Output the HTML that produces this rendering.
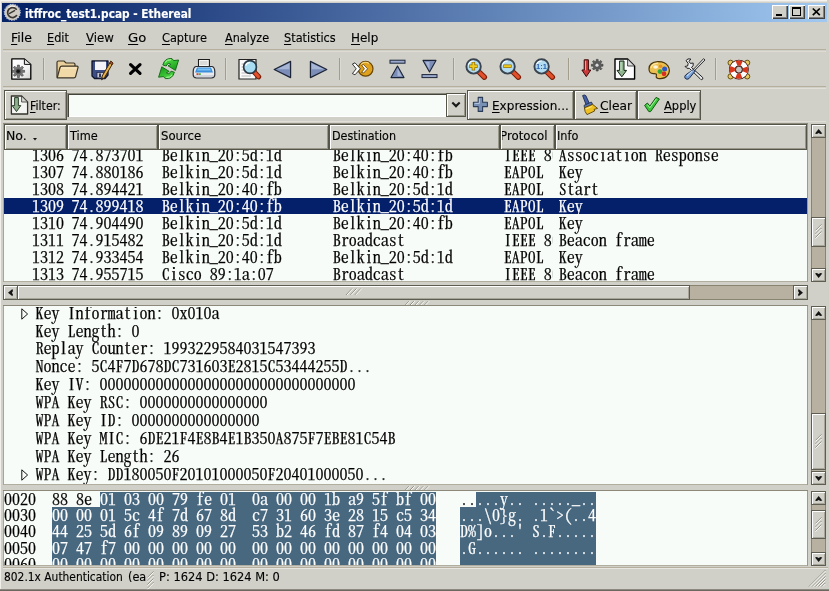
<!DOCTYPE html>
<html><head><meta charset="utf-8"><title>itffroc_test1.pcap - Ethereal</title>
<style>
html,body{margin:0;padding:0}
body{width:829px;height:591px;overflow:hidden;background:#d0d0c8;position:relative;font-family:"DejaVu Sans","Liberation Sans",sans-serif;font-size:13px}
#w{position:absolute;left:-6px;top:-6px;width:841px;height:603px;overflow:hidden;background:#d0d0c8;filter:blur(0.35px)}
#c{position:absolute;left:6px;top:6px;width:829px;height:591px;overflow:visible}
#w div,#w svg,#w span.u,#w span.m{position:absolute;box-sizing:border-box}
#w svg{overflow:visible}
span.u{white-space:pre;transform-origin:0 0;display:block;-webkit-text-stroke:0.15px currentColor}
span.u u{text-decoration:underline;text-underline-offset:1.5px;text-decoration-thickness:1px}
.r{left:0;width:803px;height:16px}
.m{top:0;height:16px;line-height:16px;font-family:"Noto Serif CJK SC","Noto Serif CJK JP","Liberation Mono",monospace;font-feature-settings:"hwid";font-size:16px;white-space:pre;clip-path:inset(-4px 0 -4px 0);letter-spacing:0;-webkit-text-stroke:0.25px currentColor}
.m .s{color:#fff}
</style></head>
<body><div id="w"><div id="c">
<div style="left:-6px;top:-6px;width:841px;height:7px;background:#f4f3ef"></div><div style="left:-6px;top:-6px;width:7px;height:603px;background:#f0efea"></div><div style="left:1px;top:1px;width:828px;height:1px;background:#e2e0d9"></div><div style="left:827px;top:0px;width:8px;height:591px;background:#d0d0c8"></div><div style="left:-6px;top:589px;width:841px;height:1px;background:#8c8a80"></div><div style="left:-6px;top:590px;width:841px;height:7px;background:#6a685f"></div><div style="left:2px;top:3px;width:825px;height:19px;background:linear-gradient(90deg,#082468 0%,#082468 3%,#a0c8f0 100%)"></div><svg style="left:3px;top:3px" width="19" height="19" viewBox="0 0 19 19">
<circle cx="9.3" cy="9.3" r="8" fill="#cfcbc2" stroke="#aebfdc" stroke-width="1.2" stroke-dasharray="1.2 1.3"/>
<circle cx="9.3" cy="9.3" r="6.9" fill="#d0ccc4"/>
<path d="M13.3 6.2 A5 5 0 1 0 13.6 12.6" fill="none" stroke="#3a3631" stroke-width="1.7" stroke-linecap="round"/>
<path d="M6.6 10.4 L11.6 7.6" stroke="#3a3631" stroke-width="1.4" stroke-linecap="round"/>
<path d="M5.5 4.5 A6 6 0 0 1 12 3.6" fill="none" stroke="#f4f2ee" stroke-width="1"/>
</svg><div style="left:772px;top:5px;width:16px;height:14px;background:#d0d0c8;box-shadow:inset 1px 1px 0 #fff, inset -1px -1px 0 #404040, inset -2px -2px 0 #808080"><div style="left:4px;top:9px;width:6px;height:2px;background:#000"></div></div><div style="left:789px;top:5px;width:16px;height:14px;background:#d0d0c8;box-shadow:inset 1px 1px 0 #fff, inset -1px -1px 0 #404040, inset -2px -2px 0 #808080"><div style="left:3px;top:2px;width:9px;height:9px;box-sizing:border-box;border:1px solid #000;border-top-width:2px"></div></div><div style="left:808px;top:5px;width:17px;height:14px;background:#d0d0c8;box-shadow:inset 1px 1px 0 #fff, inset -1px -1px 0 #404040, inset -2px -2px 0 #808080"><svg style="left:4px;top:3px" width="9" height="8" viewBox="0 0 9 8"><path d="M0.8 0.5 L7.8 7.2 M7.8 0.5 L0.8 7.2" stroke="#000" stroke-width="1.7"/></svg></div><div style="left:3px;top:49px;width:823px;height:1px;background:#b6af9e"></div><div style="left:3px;top:51px;width:823px;height:1px;background:#dedbd3"></div><div style="left:3px;top:86px;width:823px;height:1px;background:#b6af9e"></div><div style="left:3px;top:88px;width:823px;height:1px;background:#e2dfd8"></div><div style="left:3px;top:121px;width:823px;height:1px;background:#e2dfd8"></div><div style="left:43px;top:58px;width:1px;height:22px;background:#a39d8c"></div><div style="left:44px;top:58px;width:1px;height:22px;background:#dcd9d1"></div><div style="left:225px;top:58px;width:1px;height:22px;background:#a39d8c"></div><div style="left:226px;top:58px;width:1px;height:22px;background:#dcd9d1"></div><div style="left:339px;top:58px;width:1px;height:22px;background:#a39d8c"></div><div style="left:340px;top:58px;width:1px;height:22px;background:#dcd9d1"></div><div style="left:453px;top:58px;width:1px;height:22px;background:#a39d8c"></div><div style="left:454px;top:58px;width:1px;height:22px;background:#dcd9d1"></div><div style="left:568px;top:58px;width:1px;height:22px;background:#a39d8c"></div><div style="left:569px;top:58px;width:1px;height:22px;background:#dcd9d1"></div><div style="left:715px;top:58px;width:1px;height:22px;background:#a39d8c"></div><div style="left:716px;top:58px;width:1px;height:22px;background:#dcd9d1"></div><svg style="left:11px;top:58px" width="21" height="22" viewBox="0 0 21 22">
<defs><linearGradient id="dg" x1="0" y1="0" x2="1" y2="1"><stop offset="0" stop-color="#ffffff"/><stop offset="0.6" stop-color="#f4f4f4"/><stop offset="1" stop-color="#d2d2d0"/></linearGradient></defs>
<path d="M0.8 0.9 H13.4 L19.8 6.6 V21.2 H0.8 Z" fill="url(#dg)" stroke="#000" stroke-width="1.3" stroke-linejoin="round"/>
<path d="M13.4 1.2 V6.4 H19.6" fill="#e6e6e4" stroke="#111" stroke-width="1"/>
<path d="M11.48 12.29 L13.61 12.27 L13.61 14.33 L11.48 14.31 L11.00 15.47 L12.53 16.96 L11.06 18.43 L9.57 16.90 L8.41 17.38 L8.43 19.51 L6.37 19.51 L6.39 17.38 L5.23 16.90 L3.74 18.43 L2.27 16.96 L3.80 15.47 L3.32 14.31 L1.19 14.33 L1.19 12.27 L3.32 12.29 L3.80 11.13 L2.27 9.64 L3.74 8.17 L5.23 9.70 L6.39 9.22 L6.37 7.09 L8.43 7.09 L8.41 9.22 L9.57 9.70 L11.06 8.17 L12.53 9.64 L11.00 11.13 Z" fill="#7a7a7a" stroke="#333" stroke-width="0.55" stroke-linejoin="round"/><circle cx="7.4" cy="13.3" r="2.8" fill="#565656"/><circle cx="7.2" cy="13.3" r="1.8" fill="#151515"/></svg><svg style="left:56px;top:60px" width="23" height="19" viewBox="0 0 23 19">
<path d="M1 17.5 V2.5 Q1 1 2.5 1 H8 L10 3 H17.5 Q19 3 19 4.5 V6" fill="#e9cf9c" stroke="#3c3424" stroke-width="1.2"/>
<path d="M1.2 17.8 L4 7.5 Q4.4 6.2 5.8 6.2 H21 Q22.4 6.2 22 7.6 L19.6 16.6 Q19.2 17.8 18 17.8 Z" fill="#f1d9a8" stroke="#3c3424" stroke-width="1.2" stroke-linejoin="round"/>
<path d="M5 8 H20.5" stroke="#fbecc8" stroke-width="1"/></svg><svg style="left:91px;top:58px" width="23" height="23" viewBox="0 0 23 23">
<path d="M1 3 H17 V17 L14 20.5 H3.5 L1 18 Z" fill="#3d4d86" stroke="#10142a" stroke-width="1.3" stroke-linejoin="round"/>
<rect x="4" y="3.6" width="11" height="8.4" fill="#f4f4f8"/>
<rect x="6" y="14.5" width="8" height="5.4" fill="#c8c8d0" stroke="#1c2040" stroke-width="0.7"/>
<rect x="8" y="15.5" width="2" height="3.5" fill="#30365c"/>
<path d="M19.8 3.2 L22 5 L13.6 19.4 L10.6 21.8 L11.2 18 Z" fill="#e8b24a" stroke="#3a2608" stroke-width="1"/>
<path d="M19.8 3.2 L22 5 L21 6.8 L18.8 5 Z" fill="#d64a30" stroke="#3a2608" stroke-width="0.8"/>
<path d="M10.6 21.8 L11 19.6 L12.4 20.6 Z" fill="#222"/></svg><svg style="left:128px;top:62px" width="15" height="14" viewBox="0 0 15 14">
<path d="M2.6 2.6 L12 11.4 M12 2.6 L2.6 11.4" stroke="#000" stroke-width="3.2" stroke-linecap="round"/></svg><svg style="left:158px;top:57px" width="22" height="24" viewBox="0 0 22 24">
<defs><linearGradient id="rg" x1="0" y1="0" x2="0.6" y2="1"><stop offset="0" stop-color="#5ae44e"/><stop offset="1" stop-color="#1aa01c"/></linearGradient></defs>
<g id="ra"><path d="M4.8 8 Q6.8 0.6 14 1.6 L15.6 3.6 L20.6 3 L17.4 13.4 L10 8.8 L12.8 7.4 Q10.2 4.8 8.2 9 Z" fill="url(#rg)" stroke="#0e6410" stroke-width="0.9" stroke-linejoin="round"/>
<path d="M7.2 5.4 Q9 2.4 13 2.8" fill="none" stroke="#b4f8a4" stroke-width="1"/></g>
<use href="#ra" transform="rotate(180 10.6 11.6)"/></svg><svg style="left:192px;top:58px" width="24" height="22" viewBox="0 0 24 22">
<path d="M6.5 9 V1.5 H17.4 V9" fill="#f6f6f6" stroke="#1c1c1c" stroke-width="1.1"/>
<path d="M8 4 H15.5 M8 6 H15.5" stroke="#b0b0b0" stroke-width="0.8"/>
<path d="M4 8.5 H20 Q22.6 9 22.8 13.5 V17 Q22.6 19.8 19.5 20 H4.5 Q1.4 19.8 1.2 17 V13.5 Q1.4 9 4 8.5 Z" fill="#e8eaee" stroke="#2a2c34" stroke-width="1.2"/>
<path d="M5 9.6 H19 L21 14.4 H3 Z" fill="#3b8fdc"/>
<path d="M6 10.4 H18 L19 12.4 H5.2 Z" fill="#7cc2f4"/>
<rect x="4.5" y="15.3" width="2" height="1.6" fill="#d03020"/><rect x="6.8" y="15.3" width="2" height="1.6" fill="#38a838"/>
<path d="M2.5 18 H21.5" stroke="#b8bcc4" stroke-width="1"/></svg><svg style="left:238px;top:58px" width="24" height="23" viewBox="0 0 24 23">
<path d="M1 1.5 H18 V21 H1 Z" fill="#fafafa" stroke="#222" stroke-width="1.2"/>
<path d="M3.5 6 H8 M3.5 9 H7 M3.5 12 H8 M3.5 15 H14 M3.5 18 H13" stroke="#b8b8b8" stroke-width="1"/>
<path d="M16.4 14.2 L20.6 18.8" stroke="#7a1e0a" stroke-width="5.2" stroke-linecap="round"/>
<path d="M16.6 14.4 L20.4 18.6" stroke="#e0502a" stroke-width="3.2" stroke-linecap="round"/>
<circle cx="12" cy="9" r="6.4" fill="#a8dcf2" stroke="#2c3a48" stroke-width="1.7"/>
<path d="M7.8 7.6 A4 4 0 0 1 12 4.6" fill="none" stroke="#fff" stroke-width="1.3"/></svg><svg style="left:273px;top:60px" width="19" height="19" viewBox="0 0 19 19">
<path d="M1.2 9.5 L17.6 1.4 V17.6 Z" fill="#7c8eb8" stroke="#1c2438" stroke-width="1.2" stroke-linejoin="round"/>
<path d="M4 9.3 L16.4 3.3 V9.3 Z" fill="#a8b6d6"/></svg><svg style="left:309px;top:60px" width="19" height="19" viewBox="0 0 19 19">
<path d="M17.8 9.5 L1.4 1.4 V17.6 Z" fill="#7c8eb8" stroke="#1c2438" stroke-width="1.2" stroke-linejoin="round"/>
<path d="M15 9.3 L2.6 3.3 V9.3 Z" fill="#a8b6d6"/></svg><svg style="left:351px;top:60px" width="23" height="18" viewBox="0 0 23 18">
<circle cx="14.6" cy="8.8" r="7.4" fill="#e0a21c" stroke="#6a4604" stroke-width="1.2"/>
<path d="M10 4.6 A6 6 0 0 1 18 3.4" fill="none" stroke="#f8dc84" stroke-width="1.2"/>
<path d="M1.4 4 L4 2.8 L9.4 8.8 L4 14.8 L1.4 13.6 L5.2 8.8 Z" fill="#fff" stroke="#222" stroke-width="0.9" stroke-linejoin="round"/>
<path d="M10.6 5.2 L12.6 4.6 L16.6 8.8 L12.6 13 L10.6 12.4 L13.4 8.8 Z" fill="#fff" stroke="#5a3a04" stroke-width="0.8" stroke-linejoin="round"/></svg><svg style="left:389px;top:59px" width="17" height="20" viewBox="0 0 17 20">
<rect x="1" y="1.2" width="15" height="3" fill="#9caace" stroke="#1c2438" stroke-width="1"/>
<path d="M8.5 7 L15 18.6 H2 Z" fill="#7c8eb8" stroke="#1c2438" stroke-width="1.1" stroke-linejoin="round"/>
<path d="M8.5 9 L12.6 17 H8.5 Z" fill="#a8b6d6"/></svg><svg style="left:421px;top:59px" width="17" height="20" viewBox="0 0 17 20">
<rect x="1" y="15.6" width="15" height="3" fill="#9caace" stroke="#1c2438" stroke-width="1"/>
<path d="M8.5 13 L15 1.4 H2 Z" fill="#7c8eb8" stroke="#1c2438" stroke-width="1.1" stroke-linejoin="round"/>
<path d="M8.5 11 L4.4 3 H8.5 Z" fill="#a8b6d6"/></svg><svg style="left:465px;top:58px" width="23" height="23" viewBox="0 0 23 23">
<path d="M13.4 13.4 L19.4 19.2" stroke="#7a1e0a" stroke-width="5.4" stroke-linecap="round"/>
<path d="M13.6 13.6 L19.2 19" stroke="#e0502a" stroke-width="3.4" stroke-linecap="round"/>
<circle cx="8.6" cy="8.4" r="7.2" fill="#b4dcf0" stroke="#3a4450" stroke-width="1.9"/>
<path d="M3.6 7.4 A5 5 0 0 1 8.6 3" fill="none" stroke="#fff" stroke-width="1.2"/>
<path d="M8.4 4 V12.4 M4.2 8.2 H12.6" stroke="#8a6a04" stroke-width="3.4"/><path d="M8.4 4.6 V11.8 M4.8 8.2 H12" stroke="#f0cc20" stroke-width="2"/></svg><svg style="left:499px;top:58px" width="23" height="23" viewBox="0 0 23 23">
<path d="M13.4 13.4 L19.4 19.2" stroke="#7a1e0a" stroke-width="5.4" stroke-linecap="round"/>
<path d="M13.6 13.6 L19.2 19" stroke="#e0502a" stroke-width="3.4" stroke-linecap="round"/>
<circle cx="8.6" cy="8.4" r="7.2" fill="#b4dcf0" stroke="#3a4450" stroke-width="1.9"/>
<path d="M3.6 7.4 A5 5 0 0 1 8.6 3" fill="none" stroke="#fff" stroke-width="1.2"/>
<path d="M4.2 8.2 H12.6" stroke="#8a6a04" stroke-width="3.4"/><path d="M4.8 8.2 H12" stroke="#f0cc20" stroke-width="2"/></svg><svg style="left:533px;top:58px" width="23" height="23" viewBox="0 0 23 23">
<path d="M13.4 13.4 L19.4 19.2" stroke="#7a1e0a" stroke-width="5.4" stroke-linecap="round"/>
<path d="M13.6 13.6 L19.2 19" stroke="#e0502a" stroke-width="3.4" stroke-linecap="round"/>
<circle cx="8.6" cy="8.4" r="7.2" fill="#b4dcf0" stroke="#3a4450" stroke-width="1.9"/>
<path d="M3.6 7.4 A5 5 0 0 1 8.6 3" fill="none" stroke="#fff" stroke-width="1.2"/>
<text x="8.4" y="11" font-family="Liberation Sans,sans-serif" font-weight="bold" font-size="7.5" text-anchor="middle" fill="#2a64b8">1:1</text></svg><svg style="left:581px;top:58px" width="23" height="20" viewBox="0 0 23 20">
<path d="M3.2 1.8 H7.4 V12 H9.8 L5.3 18.6 L0.9 12 H3.2 Z" fill="#c83c3c" stroke="#3a0808" stroke-width="1" stroke-linejoin="round"/>
<path d="M4.5 2.8 V12.4" stroke="#eaa0a0" stroke-width="1"/>
<path d="M20.08 6.24 L22.02 6.23 L22.02 8.17 L20.08 8.16 L19.63 9.26 L21.00 10.63 L19.63 12.00 L18.26 10.63 L17.16 11.08 L17.17 13.02 L15.23 13.02 L15.24 11.08 L14.14 10.63 L12.77 12.00 L11.40 10.63 L12.77 9.26 L12.32 8.16 L10.38 8.17 L10.38 6.23 L12.32 6.24 L12.77 5.14 L11.40 3.77 L12.77 2.40 L14.14 3.77 L15.24 3.32 L15.23 1.38 L17.17 1.38 L17.16 3.32 L18.26 3.77 L19.63 2.40 L21.00 3.77 L19.63 5.14 Z" fill="#5e5e5e" stroke="#333" stroke-width="0.55" stroke-linejoin="round"/><circle cx="16.2" cy="7.2" r="2.6" fill="#565656"/><circle cx="16.0" cy="7.2" r="1.6" fill="#dcdcdc"/></svg><svg style="left:614px;top:58px" width="22" height="22" viewBox="0 0 22 22">
<path d="M1 1 H13.6 L20.6 8 V21 H1 Z" fill="#fbfbfb" stroke="#000" stroke-width="1.4" stroke-linejoin="round"/>
<path d="M13.6 1 V8 H20.6 Z" fill="#dcdcdc" stroke="#222" stroke-width="0.8"/>
<path d="M5.6 3 H10 V12.4 H12.6 L7.8 18.8 L3 12.4 H5.6 Z" fill="#8fb48f" stroke="#142814" stroke-width="1" stroke-linejoin="round"/>
<path d="M7 4 V13" stroke="#d0ecd0" stroke-width="1"/></svg><svg style="left:647px;top:60px" width="24" height="20" viewBox="0 0 24 20">
<path d="M2 9 Q2 2 11 1.6 Q18 1.4 21 6 Q24 11 20.4 15.6 Q17 19.6 11 18.4 Q8.6 17.8 9.4 15.4 Q10 13.4 7 13.6 Q2 14 2 9 Z" fill="#ecc050" stroke="#4a3408" stroke-width="1.2"/>
<path d="M4 8 Q5 3.6 11 3.2" fill="none" stroke="#fae8a8" stroke-width="1.3"/>
<ellipse cx="8.6" cy="7" rx="2.4" ry="1.7" fill="#fbf4dc"/>
<circle cx="13" cy="11.6" r="2.4" fill="#30a838"/>
<circle cx="17.6" cy="9" r="2.5" fill="#2c58c8"/>
<circle cx="17" cy="13.8" r="2.4" fill="#d83020"/>
<circle cx="13.6" cy="6.2" r="1.8" fill="#e89020"/></svg><svg style="left:683px;top:57px" width="23" height="24" viewBox="0 0 23 24">
<path d="M3 3.6 Q4.6 1 7.8 2 L6 4.4 L7.4 6.4 L10.2 6 Q11 9.4 8.4 10.4 L19.6 20.4 Q20.6 22.4 18.6 22.6 Q17.6 22.6 17 21.6 L6.4 11.4 Q3.4 12 2 9.4 L4.6 9 L5.2 6.4 Z" fill="#e8eaec" stroke="#222" stroke-width="1" stroke-linejoin="round"/>
<path d="M20.6 1.6 L22 3 L11.6 13.6 L10.4 12.4 Z" fill="#d8dadc" stroke="#222" stroke-width="0.9"/>
<path d="M10.6 12.4 L12.2 14 L6 21.6 Q4 23 2.2 21.4 Q1 19.8 2.6 18 Z" fill="#78a0d8" stroke="#1c2c4c" stroke-width="1" stroke-linejoin="round"/>
<path d="M4 19 L9.4 13.6" stroke="#c4daf4" stroke-width="1.1"/></svg><svg style="left:727px;top:59px" width="24" height="21" viewBox="0 0 24 21">
<circle cx="3.6" cy="3.8" r="2.6" fill="#e8c860" stroke="#5a4408" stroke-width="0.9"/>
<circle cx="20.2" cy="3.8" r="2.6" fill="#e8c860" stroke="#5a4408" stroke-width="0.9"/>
<circle cx="3.6" cy="17.4" r="2.6" fill="#e8c860" stroke="#5a4408" stroke-width="0.9"/>
<circle cx="20.2" cy="17.4" r="2.6" fill="#e8c860" stroke="#5a4408" stroke-width="0.9"/>
<circle cx="11.9" cy="10.6" r="6.6" fill="none" stroke="#3a0a04" stroke-width="6.6"/>
<circle cx="11.9" cy="10.6" r="6.6" fill="none" stroke="#fff" stroke-width="5.2"/>
<circle cx="11.9" cy="10.6" r="6.6" fill="none" stroke="#d8381c" stroke-width="5.2" stroke-dasharray="5.2 5.17" stroke-dashoffset="2.6"/>
<circle cx="11.9" cy="10.6" r="3.4" fill="#c8c6c0" stroke="#3a0a04" stroke-width="0.8"/></svg><div style="left:4px;top:90px;width:63px;height:30px;background:#d0d0c8;box-shadow:inset 0 0 0 1px #56554a, inset 2px 2px 0 #fff, inset -2px -2px 0 #9a978b"></div><svg style="left:10px;top:95px" width="19" height="20" viewBox="0 0 19 20">
<path d="M1.4 1 H11.6 L17.6 7 V19 H1.4 Z" fill="#f4f4f2" stroke="#33332c" stroke-width="1.3" stroke-linejoin="round"/>
<path d="M11.6 1 V7 H17.6 Z" fill="#d8d8d4" stroke="#33332c" stroke-width="0.8"/>
<path d="M4.6 2.6 H8.4 V10.6 H10.8 L6.5 16.6 L2.2 10.6 H4.6 Z" fill="#8fb08f" stroke="#1c301c" stroke-width="0.9" stroke-linejoin="round"/>
</svg><div style="left:67px;top:93px;width:379px;height:24px;background:#f8fcf8;box-shadow:inset 1px 1px 0 #8a887c, inset 2px 2px 0 #45443c, inset -1px -1px 0 #fff"></div><div style="left:446px;top:93px;width:20px;height:24px;background:#d0d0c8;box-shadow:inset 0 0 0 1px #56554a, inset 2px 2px 0 #fff, inset -2px -2px 0 #9a978b"><svg style="left:5px;top:8px" width="10" height="8" viewBox="0 0 10 8"><path d="M0.6 2.2 L5 6.8 L9.4 2.2 L8 0.8 L5 3.6 L2 0.8 Z" fill="#1a1a1a"/></svg></div><div style="left:467px;top:90px;width:107px;height:30px;background:#d0d0c8;box-shadow:inset 0 0 0 1px #56554a, inset 2px 2px 0 #fff, inset -2px -2px 0 #9a978b"></div><svg style="left:472px;top:96px" width="17" height="17" viewBox="0 0 17 17">
<path d="M6.2 1.4 H10.6 V6.2 H15.4 V10.6 H10.6 V15.4 H6.2 V10.6 H1.4 V6.2 H6.2 Z" fill="#7890b4" stroke="#2c3c58" stroke-width="1.1" stroke-linejoin="round"/>
<path d="M7.4 2.6 V7.4 H2.6" fill="none" stroke="#b8c8e0" stroke-width="1"/></svg><div style="left:574px;top:90px;width:63px;height:30px;background:#d0d0c8;box-shadow:inset 0 0 0 1px #56554a, inset 2px 2px 0 #fff, inset -2px -2px 0 #9a978b"></div><svg style="left:579px;top:94px" width="20" height="22" viewBox="0 0 20 22">
<path d="M3.6 1.6 Q5.4 0.4 6.8 1.6 L10.4 9.4 L7.2 11 Z" fill="#4460a8" stroke="#1c2848" stroke-width="0.9"/>
<path d="M5 11.4 L12.4 8 L13.6 10.4 L5.6 14 Z" fill="#5a78b8" stroke="#1c2848" stroke-width="0.8"/>
<path d="M5.4 13.8 L13.6 10.4 L18.6 14.4 L15 15.4 L15.6 17 L8 20.6 Q5.6 18 5.4 13.8 Z" fill="#f0c020" stroke="#5a4404" stroke-width="0.9" stroke-linejoin="round"/>
<path d="M7 15 L13 12.4" stroke="#fae890" stroke-width="1"/></svg><div style="left:637px;top:90px;width:64px;height:30px;background:#d0d0c8;box-shadow:inset 0 0 0 1px #56554a, inset 2px 2px 0 #fff, inset -2px -2px 0 #9a978b"></div><svg style="left:643px;top:96px" width="18" height="17" viewBox="0 0 18 17">
<path d="M1.6 9.4 L4.4 7 L6.8 10.2 L13 1.4 L16.4 3 L7.6 15.6 L5.8 15.6 Z" fill="#3cc83c" stroke="#145a14" stroke-width="1" stroke-linejoin="round"/>
<path d="M4.4 8.6 L6.8 11.8 L13.4 2.8" fill="none" stroke="#a8f0a0" stroke-width="1"/></svg><div style="left:811px;top:124px;width:15px;height:158px;background:#b8b0a0;box-shadow:inset 0 0 0 1px #88846f"></div><div style="left:811px;top:124px;width:15px;height:14px;background:#d0d0c8;box-shadow:inset 0 0 0 1px #5e5d52, inset 2px 2px 0 #fff, inset -2px -2px 0 #a8a59a"><svg style="left:3.9px;top:4.6px" width="7.3" height="5" viewBox="0 0 7.3 5"><path d="M0 4.4 L3.65 0 L7.3 4.4 L5.4 5 L3.65 3.9 L1.9 5 Z" fill="#141414"/></svg></div><div style="left:811px;top:268px;width:15px;height:14px;background:#d0d0c8;box-shadow:inset 0 0 0 1px #5e5d52, inset 2px 2px 0 #fff, inset -2px -2px 0 #a8a59a"><svg style="left:3.9px;top:4.6px" width="7.3" height="5" viewBox="0 0 7.3 5"><path d="M0 0.6 L3.65 5 L7.3 0.6 L5.4 0 L3.65 1.1 L1.9 0 Z" fill="#141414"/></svg></div><div style="left:811px;top:217px;width:15px;height:30px;background:#d0d0c8;box-shadow:inset 0 0 0 1px #5e5d52, inset 2px 2px 0 #fff, inset -2px -2px 0 #a8a59a"></div><svg style="left:815px;top:224.0px" width="7" height="16" viewBox="0 0 7 16"><path d="M0.5 6.4 L6.5 0.4" stroke="#8a887c" stroke-width="0.9"/><path d="M0.5 7.4 L6.5 1.4" stroke="#fff" stroke-width="0.9"/><path d="M0.5 10.0 L6.5 3.9999999999999996" stroke="#8a887c" stroke-width="0.9"/><path d="M0.5 11.0 L6.5 5.0" stroke="#fff" stroke-width="0.9"/><path d="M0.5 13.6 L6.5 7.6" stroke="#8a887c" stroke-width="0.9"/><path d="M0.5 14.6 L6.5 8.6" stroke="#fff" stroke-width="0.9"/></svg><div style="left:811px;top:306px;width:15px;height:179px;background:#b8b0a0;box-shadow:inset 0 0 0 1px #88846f"></div><div style="left:811px;top:306px;width:15px;height:14px;background:#d0d0c8;box-shadow:inset 0 0 0 1px #5e5d52, inset 2px 2px 0 #fff, inset -2px -2px 0 #a8a59a"><svg style="left:3.9px;top:4.6px" width="7.3" height="5" viewBox="0 0 7.3 5"><path d="M0 4.4 L3.65 0 L7.3 4.4 L5.4 5 L3.65 3.9 L1.9 5 Z" fill="#141414"/></svg></div><div style="left:811px;top:471px;width:15px;height:14px;background:#d0d0c8;box-shadow:inset 0 0 0 1px #5e5d52, inset 2px 2px 0 #fff, inset -2px -2px 0 #a8a59a"><svg style="left:3.9px;top:4.6px" width="7.3" height="5" viewBox="0 0 7.3 5"><path d="M0 0.6 L3.65 5 L7.3 0.6 L5.4 0 L3.65 1.1 L1.9 0 Z" fill="#141414"/></svg></div><div style="left:811px;top:413px;width:15px;height:57px;background:#d0d0c8;box-shadow:inset 0 0 0 1px #5e5d52, inset 2px 2px 0 #fff, inset -2px -2px 0 #a8a59a"></div><svg style="left:815px;top:433.5px" width="7" height="16" viewBox="0 0 7 16"><path d="M0.5 6.4 L6.5 0.4" stroke="#8a887c" stroke-width="0.9"/><path d="M0.5 7.4 L6.5 1.4" stroke="#fff" stroke-width="0.9"/><path d="M0.5 10.0 L6.5 3.9999999999999996" stroke="#8a887c" stroke-width="0.9"/><path d="M0.5 11.0 L6.5 5.0" stroke="#fff" stroke-width="0.9"/><path d="M0.5 13.6 L6.5 7.6" stroke="#8a887c" stroke-width="0.9"/><path d="M0.5 14.6 L6.5 8.6" stroke="#fff" stroke-width="0.9"/></svg><div style="left:811px;top:491px;width:15px;height:75px;background:#b8b0a0;box-shadow:inset 0 0 0 1px #88846f"></div><div style="left:811px;top:491px;width:15px;height:14px;background:#d0d0c8;box-shadow:inset 0 0 0 1px #5e5d52, inset 2px 2px 0 #fff, inset -2px -2px 0 #a8a59a"><svg style="left:3.9px;top:4.6px" width="7.3" height="5" viewBox="0 0 7.3 5"><path d="M0 4.4 L3.65 0 L7.3 4.4 L5.4 5 L3.65 3.9 L1.9 5 Z" fill="#141414"/></svg></div><div style="left:811px;top:552px;width:15px;height:14px;background:#d0d0c8;box-shadow:inset 0 0 0 1px #5e5d52, inset 2px 2px 0 #fff, inset -2px -2px 0 #a8a59a"><svg style="left:3.9px;top:4.6px" width="7.3" height="5" viewBox="0 0 7.3 5"><path d="M0 0.6 L3.65 5 L7.3 0.6 L5.4 0 L3.65 1.1 L1.9 0 Z" fill="#141414"/></svg></div><div style="left:811px;top:510px;width:15px;height:29px;background:#d0d0c8;box-shadow:inset 0 0 0 1px #5e5d52, inset 2px 2px 0 #fff, inset -2px -2px 0 #a8a59a"></div><svg style="left:815px;top:516.5px" width="7" height="16" viewBox="0 0 7 16"><path d="M0.5 6.4 L6.5 0.4" stroke="#8a887c" stroke-width="0.9"/><path d="M0.5 7.4 L6.5 1.4" stroke="#fff" stroke-width="0.9"/><path d="M0.5 10.0 L6.5 3.9999999999999996" stroke="#8a887c" stroke-width="0.9"/><path d="M0.5 11.0 L6.5 5.0" stroke="#fff" stroke-width="0.9"/><path d="M0.5 13.6 L6.5 7.6" stroke="#8a887c" stroke-width="0.9"/><path d="M0.5 14.6 L6.5 8.6" stroke="#fff" stroke-width="0.9"/></svg><div style="left:3px;top:285px;width:805px;height:15px;background:#b8b0a0;box-shadow:inset 0 0 0 1px #88846f"></div><div style="left:3px;top:285px;width:15px;height:15px;background:#d0d0c8;box-shadow:inset 0 0 0 1px #5e5d52, inset 2px 2px 0 #fff, inset -2px -2px 0 #a8a59a"><svg style="left:4.8px;top:3.8px" width="5" height="7.3" viewBox="0 0 5 7.3"><path d="M4.4 0 L0 3.65 L4.4 7.3 L5 5.4 L3.9 3.65 L5 1.9 Z" fill="#141414"/></svg></div><div style="left:793px;top:285px;width:15px;height:15px;background:#d0d0c8;box-shadow:inset 0 0 0 1px #5e5d52, inset 2px 2px 0 #fff, inset -2px -2px 0 #a8a59a"><svg style="left:5.2px;top:3.8px" width="5" height="7.3" viewBox="0 0 5 7.3"><path d="M0.6 0 L5 3.65 L0.6 7.3 L0 5.4 L1.1 3.65 L0 1.9 Z" fill="#141414"/></svg></div><div style="left:17px;top:285px;width:673px;height:15px;background:#d0d0c8;box-shadow:inset 0 0 0 1px #5e5d52, inset 2px 2px 0 #fff, inset -2px -2px 0 #a8a59a"></div><svg style="left:345px;top:288px" width="18" height="8" viewBox="0 0 18 8"><path d="M1.0 7 L7.0 0.6" stroke="#8a887c" stroke-width="0.9"/><path d="M2.0 7 L8.0 0.6" stroke="#fff" stroke-width="0.9"/><path d="M5.4 7 L11.4 0.6" stroke="#8a887c" stroke-width="0.9"/><path d="M6.4 7 L12.4 0.6" stroke="#fff" stroke-width="0.9"/><path d="M9.8 7 L15.8 0.6" stroke="#8a887c" stroke-width="0.9"/><path d="M10.8 7 L16.8 0.6" stroke="#fff" stroke-width="0.9"/></svg><svg style="left:404px;top:301px" width="29" height="5" viewBox="0 0 29 5"><path d="M0.5 4.8 L5.0 0.2" stroke="#8a887c" stroke-width="0.9"/><path d="M1.5 4.8 L6.0 0.2" stroke="#fff" stroke-width="0.9"/><path d="M5.3 4.8 L9.8 0.2" stroke="#8a887c" stroke-width="0.9"/><path d="M6.3 4.8 L10.8 0.2" stroke="#fff" stroke-width="0.9"/><path d="M10.1 4.8 L14.6 0.2" stroke="#8a887c" stroke-width="0.9"/><path d="M11.1 4.8 L15.6 0.2" stroke="#fff" stroke-width="0.9"/><path d="M14.899999999999999 4.8 L19.4 0.2" stroke="#8a887c" stroke-width="0.9"/><path d="M15.899999999999999 4.8 L20.4 0.2" stroke="#fff" stroke-width="0.9"/><path d="M19.7 4.8 L24.2 0.2" stroke="#8a887c" stroke-width="0.9"/><path d="M20.7 4.8 L25.2 0.2" stroke="#fff" stroke-width="0.9"/></svg><svg style="left:404px;top:486px" width="29" height="5" viewBox="0 0 29 5"><path d="M0.5 4.8 L5.0 0.2" stroke="#8a887c" stroke-width="0.9"/><path d="M1.5 4.8 L6.0 0.2" stroke="#fff" stroke-width="0.9"/><path d="M5.3 4.8 L9.8 0.2" stroke="#8a887c" stroke-width="0.9"/><path d="M6.3 4.8 L10.8 0.2" stroke="#fff" stroke-width="0.9"/><path d="M10.1 4.8 L14.6 0.2" stroke="#8a887c" stroke-width="0.9"/><path d="M11.1 4.8 L15.6 0.2" stroke="#fff" stroke-width="0.9"/><path d="M14.899999999999999 4.8 L19.4 0.2" stroke="#8a887c" stroke-width="0.9"/><path d="M15.899999999999999 4.8 L20.4 0.2" stroke="#fff" stroke-width="0.9"/><path d="M19.7 4.8 L24.2 0.2" stroke="#8a887c" stroke-width="0.9"/><path d="M20.7 4.8 L25.2 0.2" stroke="#fff" stroke-width="0.9"/></svg><div style="left:3px;top:123px;width:805px;height:159px;background:#f8fcf8;box-shadow:inset 0 1px 0 #8c887a, inset 1px 0 0 #a8a498, inset -1px 0 0 #9c9a8e, inset 0 -1px 0 #b2ae9f"></div><div style="left:4px;top:124px;width:63px;height:26px;background:#d0d0c8;box-shadow:inset 0 0 0 1px #56554a, inset 2px 2px 0 #fff, inset -2px -2px 0 #9a978b"></div><div style="left:67px;top:124px;width:91px;height:26px;background:#d0d0c8;box-shadow:inset 0 0 0 1px #56554a, inset 2px 2px 0 #fff, inset -2px -2px 0 #9a978b"></div><div style="left:158px;top:124px;width:171px;height:26px;background:#d0d0c8;box-shadow:inset 0 0 0 1px #56554a, inset 2px 2px 0 #fff, inset -2px -2px 0 #9a978b"></div><div style="left:329px;top:124px;width:171px;height:26px;background:#d0d0c8;box-shadow:inset 0 0 0 1px #56554a, inset 2px 2px 0 #fff, inset -2px -2px 0 #9a978b"></div><div style="left:500px;top:124px;width:55px;height:26px;background:#d0d0c8;box-shadow:inset 0 0 0 1px #56554a, inset 2px 2px 0 #fff, inset -2px -2px 0 #9a978b"></div><div style="left:555px;top:124px;width:252px;height:26px;background:#d0d0c8;box-shadow:inset 0 0 0 1px #56554a, inset 2px 2px 0 #fff, inset -2px -2px 0 #9a978b"></div><svg style="left:33px;top:138px" width="4" height="3" viewBox="0 0 4 3"><path d="M0 0 H4 L2 2.6 Z" fill="#111"/></svg><div style="left:4px;top:150px;width:803px;height:131px;overflow:hidden"><div style="left:0;top:-150px;width:803px;height:300px"><div class="r" style="top:146.95px;"><span class="m" style="left:0;width:60px;text-align:right">1306</span><span class="m" style="left:67.5px;width:86px">74.873701</span><span class="m" style="left:157.7px;width:167px">Belkin_20:5d:1d</span><span class="m" style="left:328.7px;width:167px">Belkin_20:40:fb</span><span class="m" style="left:499.8px;width:48.4px">IEEE 802.11</span><span class="m" style="left:554.7px;width:240px">Association Response</span></div><div class="r" style="top:164.00px;"><span class="m" style="left:0;width:60px;text-align:right">1307</span><span class="m" style="left:67.5px;width:86px">74.880186</span><span class="m" style="left:157.7px;width:167px">Belkin_20:5d:1d</span><span class="m" style="left:328.7px;width:167px">Belkin_20:40:fb</span><span class="m" style="left:499.8px;width:48.4px">EAPOL</span><span class="m" style="left:554.7px;width:240px">Key</span></div><div class="r" style="top:181.05px;"><span class="m" style="left:0;width:60px;text-align:right">1308</span><span class="m" style="left:67.5px;width:86px">74.894421</span><span class="m" style="left:157.7px;width:167px">Belkin_20:40:fb</span><span class="m" style="left:328.7px;width:167px">Belkin_20:5d:1d</span><span class="m" style="left:499.8px;width:48.4px">EAPOL</span><span class="m" style="left:554.7px;width:240px">Start</span></div><div class="r" style="top:198.10px;background:#04206a;color:#fff;"><span class="m" style="left:0;width:60px;text-align:right">1309</span><span class="m" style="left:67.5px;width:86px">74.899418</span><span class="m" style="left:157.7px;width:167px">Belkin_20:40:fb</span><span class="m" style="left:328.7px;width:167px">Belkin_20:5d:1d</span><span class="m" style="left:499.8px;width:48.4px">EAPOL</span><span class="m" style="left:554.7px;width:240px">Key</span></div><div class="r" style="top:215.15px;"><span class="m" style="left:0;width:60px;text-align:right">1310</span><span class="m" style="left:67.5px;width:86px">74.904490</span><span class="m" style="left:157.7px;width:167px">Belkin_20:5d:1d</span><span class="m" style="left:328.7px;width:167px">Belkin_20:40:fb</span><span class="m" style="left:499.8px;width:48.4px">EAPOL</span><span class="m" style="left:554.7px;width:240px">Key</span></div><div class="r" style="top:232.20px;"><span class="m" style="left:0;width:60px;text-align:right">1311</span><span class="m" style="left:67.5px;width:86px">74.915482</span><span class="m" style="left:157.7px;width:167px">Belkin_20:5d:1d</span><span class="m" style="left:328.7px;width:167px">Broadcast</span><span class="m" style="left:499.8px;width:48.4px">IEEE 802.11</span><span class="m" style="left:554.7px;width:240px">Beacon frame</span></div><div class="r" style="top:249.25px;"><span class="m" style="left:0;width:60px;text-align:right">1312</span><span class="m" style="left:67.5px;width:86px">74.933454</span><span class="m" style="left:157.7px;width:167px">Belkin_20:40:fb</span><span class="m" style="left:328.7px;width:167px">Belkin_20:5d:1d</span><span class="m" style="left:499.8px;width:48.4px">EAPOL</span><span class="m" style="left:554.7px;width:240px">Key</span></div><div class="r" style="top:266.30px;"><span class="m" style="left:0;width:60px;text-align:right">1313</span><span class="m" style="left:67.5px;width:86px">74.955715</span><span class="m" style="left:157.7px;width:167px">Cisco 89:1a:07</span><span class="m" style="left:328.7px;width:167px">Broadcast</span><span class="m" style="left:499.8px;width:48.4px">IEEE 802.11</span><span class="m" style="left:554.7px;width:240px">Beacon frame</span></div></div></div><div style="left:3px;top:305px;width:805px;height:180px;background:#f8fcf8;box-shadow:inset 0 1px 0 #8c887a, inset 1px 0 0 #a8a498, inset -1px 0 0 #9c9a8e, inset 0 -1px 0 #b2ae9f"></div><div style="left:4px;top:307px;width:803px;height:177px;overflow:hidden"><div class="r" style="top:-2.30px"><span class="m" style="left:31.5px">Key Information: 0x010a</span><svg style="left:16.6px;top:3.6px" width="8" height="12" viewBox="0 0 8 12"><path d="M0.8 0.8 L6.6 6 L0.8 11.2 Z" fill="#f8fcf8" stroke="#111" stroke-width="1"/></svg></div><div class="r" style="top:15.57px"><span class="m" style="left:31.5px">Key Length: 0</span></div><div class="r" style="top:33.44px"><span class="m" style="left:31.5px">Replay Counter: 1993229584031547393</span></div><div class="r" style="top:51.31px"><span class="m" style="left:31.5px">Nonce: 5C4F7D678DC731603E2815C53444255D...</span></div><div class="r" style="top:69.18px"><span class="m" style="left:31.5px">Key IV: 00000000000000000000000000000000</span></div><div class="r" style="top:87.05px"><span class="m" style="left:31.5px">WPA Key RSC: 0000000000000000</span></div><div class="r" style="top:104.92px"><span class="m" style="left:31.5px">WPA Key ID: 0000000000000000</span></div><div class="r" style="top:122.79px"><span class="m" style="left:31.5px">WPA Key MIC: 6DE21F4E8B4E1B350A875F7EBE81C54B</span></div><div class="r" style="top:140.66px"><span class="m" style="left:31.5px">WPA Key Length: 26</span></div><div class="r" style="top:158.53px"><span class="m" style="left:31.5px">WPA Key: DD180050F20101000050F20401000050...</span><svg style="left:16.6px;top:3.6px" width="8" height="12" viewBox="0 0 8 12"><path d="M0.8 0.8 L6.6 6 L0.8 11.2 Z" fill="#f8fcf8" stroke="#111" stroke-width="1"/></svg></div></div><div style="left:3px;top:490px;width:805px;height:76px;background:#f8fcf8;box-shadow:inset 0 1px 0 #8c887a, inset 1px 0 0 #a8a498, inset -1px 0 0 #9c9a8e, inset 0 -1px 0 #b2ae9f"></div><div style="left:4px;top:492px;width:803px;height:73px;overflow:hidden"><div style="left:96px;top:0;width:336px;height:15.30px;background:#486880"></div><div style="left:472px;top:0;width:120px;height:15.30px;background:#486880"></div><div style="left:48px;top:15.30px;width:384px;height:80px;background:#486880"></div><div style="left:456px;top:15.30px;width:136px;height:80px;background:#486880"></div><div class="r" style="top:-0.80px"><span class="m" style="left:0">0020  88 8e <span class="s">01 03 00 79 fe 01  0a 00 00 1b a9 5f bf 00</span>   ..<span class="s">...y.. ....._..</span></span></div><div class="r" style="top:15.30px"><span class="m" style="left:0">0030  <span class="s">00 00 01 5c 4f 7d 67 8d  c7 31 60 3e 28 15 c5 34</span>   <span class="s">...\O}g. .1`&gt;(..4</span></span></div><div class="r" style="top:31.40px"><span class="m" style="left:0">0040  <span class="s">44 25 5d 6f 09 89 09 27  53 b2 46 fd 87 f4 04 03</span>   <span class="s">D%]o...&#x27; S.F.....</span></span></div><div class="r" style="top:47.50px"><span class="m" style="left:0">0050  <span class="s">07 47 f7 00 00 00 00 00  00 00 00 00 00 00 00 00</span>   <span class="s">.G...... ........</span></span></div><div class="r" style="top:63.60px"><span class="m" style="left:0">0060  <span class="s">00 00 00 00 00 00 00 00  00 00 00 00 00 00 00 00</span>   <span class="s">........ ........</span></span></div></div><div style="left:3px;top:567px;width:825px;height:1px;background:#b6af9e"></div><div style="left:3px;top:568px;width:825px;height:1px;background:#e8e6e0"></div><svg style="left:147px;top:571px" width="7" height="16" viewBox="0 0 7 16"><path d="M0.5 6.4 L6.5 0.4" stroke="#8a887c" stroke-width="0.9"/><path d="M0.5 7.4 L6.5 1.4" stroke="#fff" stroke-width="0.9"/><path d="M0.5 10.0 L6.5 3.9999999999999996" stroke="#8a887c" stroke-width="0.9"/><path d="M0.5 11.0 L6.5 5.0" stroke="#fff" stroke-width="0.9"/><path d="M0.5 13.6 L6.5 7.6" stroke="#8a887c" stroke-width="0.9"/><path d="M0.5 14.6 L6.5 8.6" stroke="#fff" stroke-width="0.9"/><path d="M0.5 17.200000000000003 L6.5 11.200000000000001" stroke="#8a887c" stroke-width="0.9"/><path d="M0.5 18.200000000000003 L6.5 12.200000000000001" stroke="#fff" stroke-width="0.9"/></svg><svg style="left:808px;top:569px" width="18" height="18" viewBox="0 0 18 18"><path d="M17.5 1.0 L1.0 17.5" stroke="#8a887c" stroke-width="0.9"/><path d="M17.5 2.0 L2.0 17.5" stroke="#fff" stroke-width="0.9"/><path d="M17.5 4.2 L4.2 17.5" stroke="#8a887c" stroke-width="0.9"/><path d="M17.5 5.2 L5.2 17.5" stroke="#fff" stroke-width="0.9"/><path d="M17.5 7.4 L7.4 17.5" stroke="#8a887c" stroke-width="0.9"/><path d="M17.5 8.4 L8.4 17.5" stroke="#fff" stroke-width="0.9"/><path d="M17.5 10.600000000000001 L10.600000000000001 17.5" stroke="#8a887c" stroke-width="0.9"/><path d="M17.5 11.600000000000001 L11.600000000000001 17.5" stroke="#fff" stroke-width="0.9"/><path d="M17.5 13.8 L13.8 17.5" stroke="#8a887c" stroke-width="0.9"/><path d="M17.5 14.8 L14.8 17.5" stroke="#fff" stroke-width="0.9"/></svg>
<span class="u" style="left:24.95px;top:5.77px;height:16px;line-height:16px;font-size:12.5px;color:#fff;font-weight:bold;transform:scaleX(0.8447);">itffroc_test1.pcap - Ethereal</span><span class="u" style="left:11.10px;top:29.50px;height:16px;line-height:16px;font-size:13px;color:#000;transform:scaleX(0.9582);"><u>F</u>ile</span><span class="u" style="left:47.30px;top:29.50px;height:16px;line-height:16px;font-size:13px;color:#000;transform:scaleX(0.8708);"><u>E</u>dit</span><span class="u" style="left:85.75px;top:29.50px;height:16px;line-height:16px;font-size:13px;color:#000;transform:scaleX(0.9009);"><u>V</u>iew</span><span class="u" style="left:128.30px;top:29.50px;height:16px;line-height:16px;font-size:13px;color:#000;transform:scaleX(1.0123);"><u>G</u>o</span><span class="u" style="left:162.10px;top:29.50px;height:16px;line-height:16px;font-size:13px;color:#000;transform:scaleX(0.8700);"><u>C</u>apture</span><span class="u" style="left:224.75px;top:29.50px;height:16px;line-height:16px;font-size:13px;color:#000;transform:scaleX(0.8611);"><u>A</u>nalyze</span><span class="u" style="left:283.95px;top:29.50px;height:16px;line-height:16px;font-size:13px;color:#000;transform:scaleX(0.8701);"><u>S</u>tatistics</span><span class="u" style="left:350.95px;top:29.50px;height:16px;line-height:16px;font-size:13px;color:#000;transform:scaleX(0.9190);"><u>H</u>elp</span><span class="u" style="left:30.30px;top:98.00px;height:16px;line-height:16px;font-size:13px;color:#000;transform:scaleX(0.8433);"><u>F</u>ilter:</span><span class="u" style="left:492.35px;top:98.00px;height:16px;line-height:16px;font-size:13px;color:#000;transform:scaleX(0.9260);"><u>E</u>xpression...</span><span class="u" style="left:599.95px;top:98.00px;height:16px;line-height:16px;font-size:13px;color:#000;transform:scaleX(0.9382);"><u>C</u>lear</span><span class="u" style="left:664.00px;top:98.00px;height:16px;line-height:16px;font-size:13px;color:#000;transform:scaleX(0.8826);"><u>A</u>pply</span><span class="u" style="left:6.15px;top:127.50px;height:16px;line-height:16px;font-size:13px;color:#000;transform:scaleX(0.9631);">No.</span><span class="u" style="left:70.20px;top:127.50px;height:16px;line-height:16px;font-size:13px;color:#000;transform:scaleX(0.8707);">Time</span><span class="u" style="left:160.90px;top:127.50px;height:16px;line-height:16px;font-size:13px;color:#000;transform:scaleX(0.9012);">Source</span><span class="u" style="left:331.90px;top:127.50px;height:16px;line-height:16px;font-size:13px;color:#000;transform:scaleX(0.8577);">Destination</span><div style="left:502px;top:127.50px;width:51px;height:16px;overflow:hidden"><span class="u" style="left:-1.90px;top:0px;height:16px;line-height:16px;font-size:13px;color:#000;transform:scaleX(0.9050);">Protocol</span></div><span class="u" style="left:557.15px;top:127.50px;height:16px;line-height:16px;font-size:13px;color:#000;transform:scaleX(0.8700);">Info</span><span class="u" style="left:4.40px;top:568.50px;height:16px;line-height:16px;font-size:13px;color:#000;transform:scaleX(0.8220);">802.1x Authentication</span><div style="left:120px;top:568.50px;width:26.599999999999994px;height:16px;overflow:hidden"><span class="u" style="left:7.50px;top:0px;height:16px;line-height:16px;font-size:13px;color:#000;transform:scaleX(0.8680);">(ea</span></div><span class="u" style="left:158.95px;top:568.50px;height:16px;line-height:16px;font-size:13px;color:#000;transform:scaleX(0.8800);">P: 1624 D: 1624 M: 0</span>
</div></div></body></html>
